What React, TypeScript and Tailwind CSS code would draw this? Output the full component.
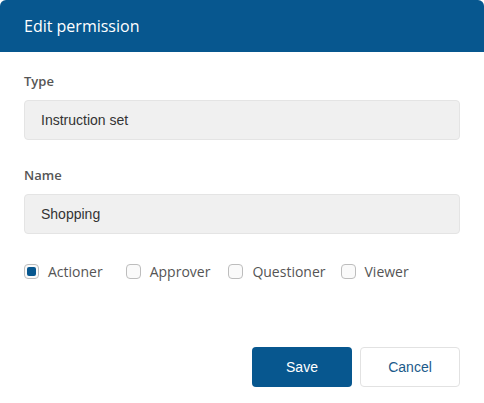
import { useState } from 'react'

const roles = ['Actioner', 'Approver', 'Questioner', 'Viewer']

export default function App() {
  const [checked, setChecked] = useState<string[]>(['Actioner'])

  const toggle = (r: string) =>
    setChecked(s => (s.includes(r) ? s.filter(x => x !== r) : [...s, r]))

  return (
    <div className="w-[484px] h-[403px] bg-white" style={{ fontFamily: '"Open Sans", sans-serif' }}>
      <div className="h-[52px] bg-[#07578f] rounded-t-[6px] flex items-center px-6">
        <h1 className="text-white text-[16px] leading-none">Edit permission</h1>
      </div>

      <div className="px-6 pt-[20px]">
        <label className="block text-[13px] font-semibold text-[#555] leading-[18px]">Type</label>
        <div className="mt-[10px] h-[40px] bg-[#f0f0f0] border border-[#e4e4e4] rounded-[4px] flex items-center px-4 text-[14px] text-[#333] font-['Liberation_Sans',Arial,sans-serif]">
          Instruction set
        </div>

        <label className="block mt-[26px] text-[13px] font-semibold text-[#555] leading-[18px]">Name</label>
        <div className="mt-[10px] h-[40px] bg-[#f0f0f0] border border-[#e4e4e4] rounded-[4px] flex items-center px-4 text-[14px] text-[#333] font-['Liberation_Sans',Arial,sans-serif]">
          Shopping
        </div>

        <div className="mt-[30px] flex items-center">
          {roles.map((r, i) => {
            const on = checked.includes(r)
            return (
              <button
                key={r}
                type="button"
                onClick={() => toggle(r)}
                className={`flex items-center gap-[9px] ${i === 0 ? 'mr-[23px]' : i === 1 ? 'mr-[18px]' : 'mr-[15px]'}`}
              >
                <span className="w-[15px] h-[15px] rounded-[4px] border border-[#bdbdbd] bg-[#fafafa] flex items-center justify-center">
                  {on && <span className="w-[9px] h-[9px] rounded-[2px] bg-[#07578f]" />}
                </span>
                <span className="text-[14px] text-[#555] leading-none">{r}</span>
              </button>
            )
          })}
        </div>

        <div className="mt-[68px] flex justify-end gap-2">
          <button className="w-[100px] h-[40px] rounded-[4px] bg-[#07578f] text-white text-[14px] font-['Liberation_Sans',Arial,sans-serif]">
            Save
          </button>
          <button className="w-[100px] h-[40px] rounded-[4px] bg-white border border-[#e2e2e2] text-[#1b5a8a] text-[14px] font-['Liberation_Sans',Arial,sans-serif]">
            Cancel
          </button>
        </div>
      </div>
    </div>
  )
}
